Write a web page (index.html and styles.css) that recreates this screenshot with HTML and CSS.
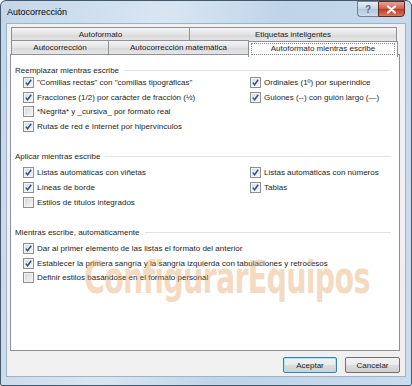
FILE: index.html
```html
<!DOCTYPE html>
<html lang="es">
<head>
    <meta charset="UTF-8">
    <meta name="viewport" content="width=device-width, initial-scale=1.0">
    <title>Autocorrección</title>
    <link rel="stylesheet" href="styles.css">
</head>
<body>
    <div class="window">
        <div class="titlebar">
            <span class="title">Autocorrección</span>
            <div class="caption-btns">
                <span class="btn-help">?</span>
                <span class="btn-close">
                    <svg width="11" height="9" viewBox="0 0 11 9"><path d="M2 1.5 L9 7.5 M9 1.5 L2 7.5" stroke="#fff" stroke-width="2.2" stroke-linecap="round"/></svg>
                </span>
            </div>
        </div>

        <div class="client">
            <div class="tabs">
                <div class="tab-row">
                    <div class="tab w178">Autoformato</div>
                    <div class="tab w208">Etiquetas inteligentes</div>
                </div>
                <div class="tab-row">
                    <div class="tab w97">Autocorrección</div>
                    <div class="tab w140">Autocorrección matemática</div>
                    <div class="tab w149 selected"><span class="focus">Autoformato mientras escribe</span></div>
                </div>
            </div>

            <div class="panel">
                <div class="section first">
                    <div class="group-title"><span>Reemplazar mientras escribe</span></div>
                    <div class="rows">
                        <div class="col">
                            <label class="check on"><i></i>"Comillas rectas" con "comillas tipográficas"</label>
                            <label class="check on"><i></i>Fracciones (1/2) por carácter de fracción (½)</label>
                            <label class="check"><i></i>*Negrita* y _cursiva_ por formato real</label>
                            <label class="check on"><i></i>Rutas de red e Internet por hipervínculos</label>
                        </div>
                        <div class="col">
                            <label class="check on"><i></i>Ordinales (1º) por superíndice</label>
                            <label class="check on"><i></i>Guiones (--) con guión largo (—)</label>
                        </div>
                    </div>
                </div>

                <div class="section">
                    <div class="group-title"><span>Aplicar mientras escribe</span></div>
                    <div class="rows">
                        <div class="col">
                            <label class="check on"><i></i>Listas automáticas con viñetas</label>
                            <label class="check on"><i></i>Líneas de borde</label>
                            <label class="check"><i></i>Estilos de títulos integrados</label>
                        </div>
                        <div class="col">
                            <label class="check on"><i></i>Listas automáticas con números</label>
                            <label class="check on"><i></i>Tablas</label>
                        </div>
                    </div>
                </div>

                <div class="section">
                    <div class="group-title"><span>Mientras escribe, automáticamente</span></div>
                    <div class="rows">
                        <div class="col">
                            <label class="check on"><i></i>Dar al primer elemento de las listas el formato del anterior</label>
                            <label class="check on"><i></i>Establecer la primera sangría y la sangría izquierda con tabulaciones y retrocesos</label>
                            <label class="check"><i></i>Definir estilos basándose en el formato personal</label>
                        </div>
                    </div>
                </div>

                <div class="watermark">ConfigurarEquipos</div>
            </div>

            <div class="buttons">
                <button class="default">Aceptar</button>
                <button>Cancelar</button>
            </div>
        </div>
    </div>
</body>
</html>
```

FILE: styles.css
```css
body {
    margin: 0;
    background: #fff;
    font-family: "Liberation Sans", Arial, sans-serif;
    font-size: 8px;
    color: #1e1e1e;
}

.window {
    width: 412px;
    height: 386px;
    box-sizing: border-box;
    border: 1px solid #44586c;
    border-radius: 6px 6px 2px 2px;
    background: linear-gradient(100deg, #c3d6e9 0%, #d9e6f2 35%, #bfd4e8 60%, #cadcee 100%);
    padding: 0 5px 8px 5px;
    display: flex;
    flex-direction: column;
}

/* barra de titulo */
.titlebar {
    height: 22px;
    display: flex;
    align-items: flex-start;
    justify-content: space-between;
}

.title {
    font-size: 9px;
    color: #000;
    margin: 6px 0 0 1px;
}

.caption-btns {
    display: flex;
    margin-right: 1px;
}

.btn-help {
    width: 21px;
    height: 16px;
    box-sizing: border-box;
    border: 1px solid #6d8199;
    border-right: none;
    border-radius: 0 0 0 4px;
    background: linear-gradient(#e6eef6, #c5d4e4 50%, #b3c6da 51%, #cfdceb);
    color: #5b6d84;
    font-size: 10px;
    font-weight: bold;
    text-align: center;
    line-height: 15px;
}

.btn-close {
    width: 27px;
    height: 16px;
    box-sizing: border-box;
    border: 1px solid #5a2a24;
    border-radius: 0 0 4px 0;
    background: linear-gradient(#e7a598, #cf5a47 50%, #c03a22 51%, #d8785e);
    display: flex;
    align-items: center;
    justify-content: center;
}

/* area del dialogo */
.client {
    flex: 1;
    background: #f0f0f0;
    border: 1px solid #9fb2c6;
    padding: 3px 5px 0 3px;
}

.tabs {
    margin: 0 1px;
    position: relative;
    z-index: 1;
}

.tab-row {
    display: flex;
    height: 13px;
}

.tab {
    box-sizing: border-box;
    height: 14px;
    border: 1px solid #8d9096;
    border-bottom: none;
    margin-right: -1px;
    background: linear-gradient(#f4f4f4, #e3e3e3 50%, #d8d8d8 51%, #e6e6e6);
    text-align: center;
    line-height: 13px;
    color: #1e1e1e;
}

.w178 { width: 179px; }
.w208 { width: 208px; }
.w97 { width: 98px; }
.w140 { width: 141px; }
.w149 { width: 150px; }

.tab.selected {
    background: #fff;
    height: 16px;
    margin-top: 1px;
    padding: 1px 2px 0;
}

.focus {
    display: block;
    border: 1px dotted #8a8a8a;
    line-height: 10px;
}

.panel {
    position: relative;
    height: 297px;
    box-sizing: border-box;
    margin-top: 1px;
    background: #fff;
    border: 1px solid #8d9096;
    padding: 9px 4px 0;
    overflow: hidden;
}

.section {
    margin-top: 17px;
}

.section.first {
    margin-top: 0;
}

.group-title {
    display: flex;
    align-items: center;
    height: 12px;
    margin-right: 4px;
}

.group-title::after {
    content: "";
    flex: 1;
    height: 1px;
    background: #dde3e8;
    margin-left: 5px;
}

.rows {
    display: flex;
    padding-left: 8px;
    margin-top: 2.6px;
}

.section.first .rows {
    margin-top: -1px;
}

.col {
    display: flex;
    flex-direction: column;
}

.col:first-child {
    width: 227px;
}

.check {
    display: flex;
    align-items: center;
    height: 14.7px;
    white-space: nowrap;
}

.check i {
    width: 11px;
    height: 11px;
    box-sizing: border-box;
    border: 1px solid #8e8f8f;
    background: linear-gradient(135deg, #d6d7d9, #f6f6f6);
    box-shadow: inset 0 0 0 1px #f4f4f4;
    margin-right: 3px;
    flex: none;
}

.check.on i {
    background: url("data:image/svg+xml,%3Csvg xmlns='http://www.w3.org/2000/svg' width='9' height='9' viewBox='0 0 9 9'%3E%3Cpath d='M1.8 4.6 L3.6 6.8 L7.2 1.8' fill='none' stroke='%233a5088' stroke-width='1.5'/%3E%3C/svg%3E") center no-repeat,
                linear-gradient(135deg, #d6dbe6, #f6f7fa);
}

/* marca de agua encima del contenido */
.watermark {
    position: absolute;
    left: 73px;
    top: 197px;
    font-family: "DejaVu Sans Condensed", "DejaVu Sans", sans-serif;
    font-weight: bold;
    font-size: 44px;
    letter-spacing: -1px;
    color: #e2a563;
    opacity: 0.4;
    transform: scaleX(0.72);
    transform-origin: left top;
    pointer-events: none;
}

.buttons {
    display: flex;
    justify-content: flex-end;
    gap: 8px;
    margin-top: 6px;
}

.buttons button {
    width: 55px;
    height: 16px;
    box-sizing: border-box;
    border: 1px solid #707070;
    border-radius: 2px;
    background: linear-gradient(#f2f2f2, #ebebeb 50%, #dddddd 51%, #cfcfcf);
    font-family: "Liberation Sans", Arial, sans-serif;
    font-size: 8px;
    color: #1e1e1e;
    padding: 0;
}

.buttons button.default {
    width: 54px;
    border-color: #3c7fb1;
    box-shadow: inset 0 0 0 1px #a8e4f6;
}
```
